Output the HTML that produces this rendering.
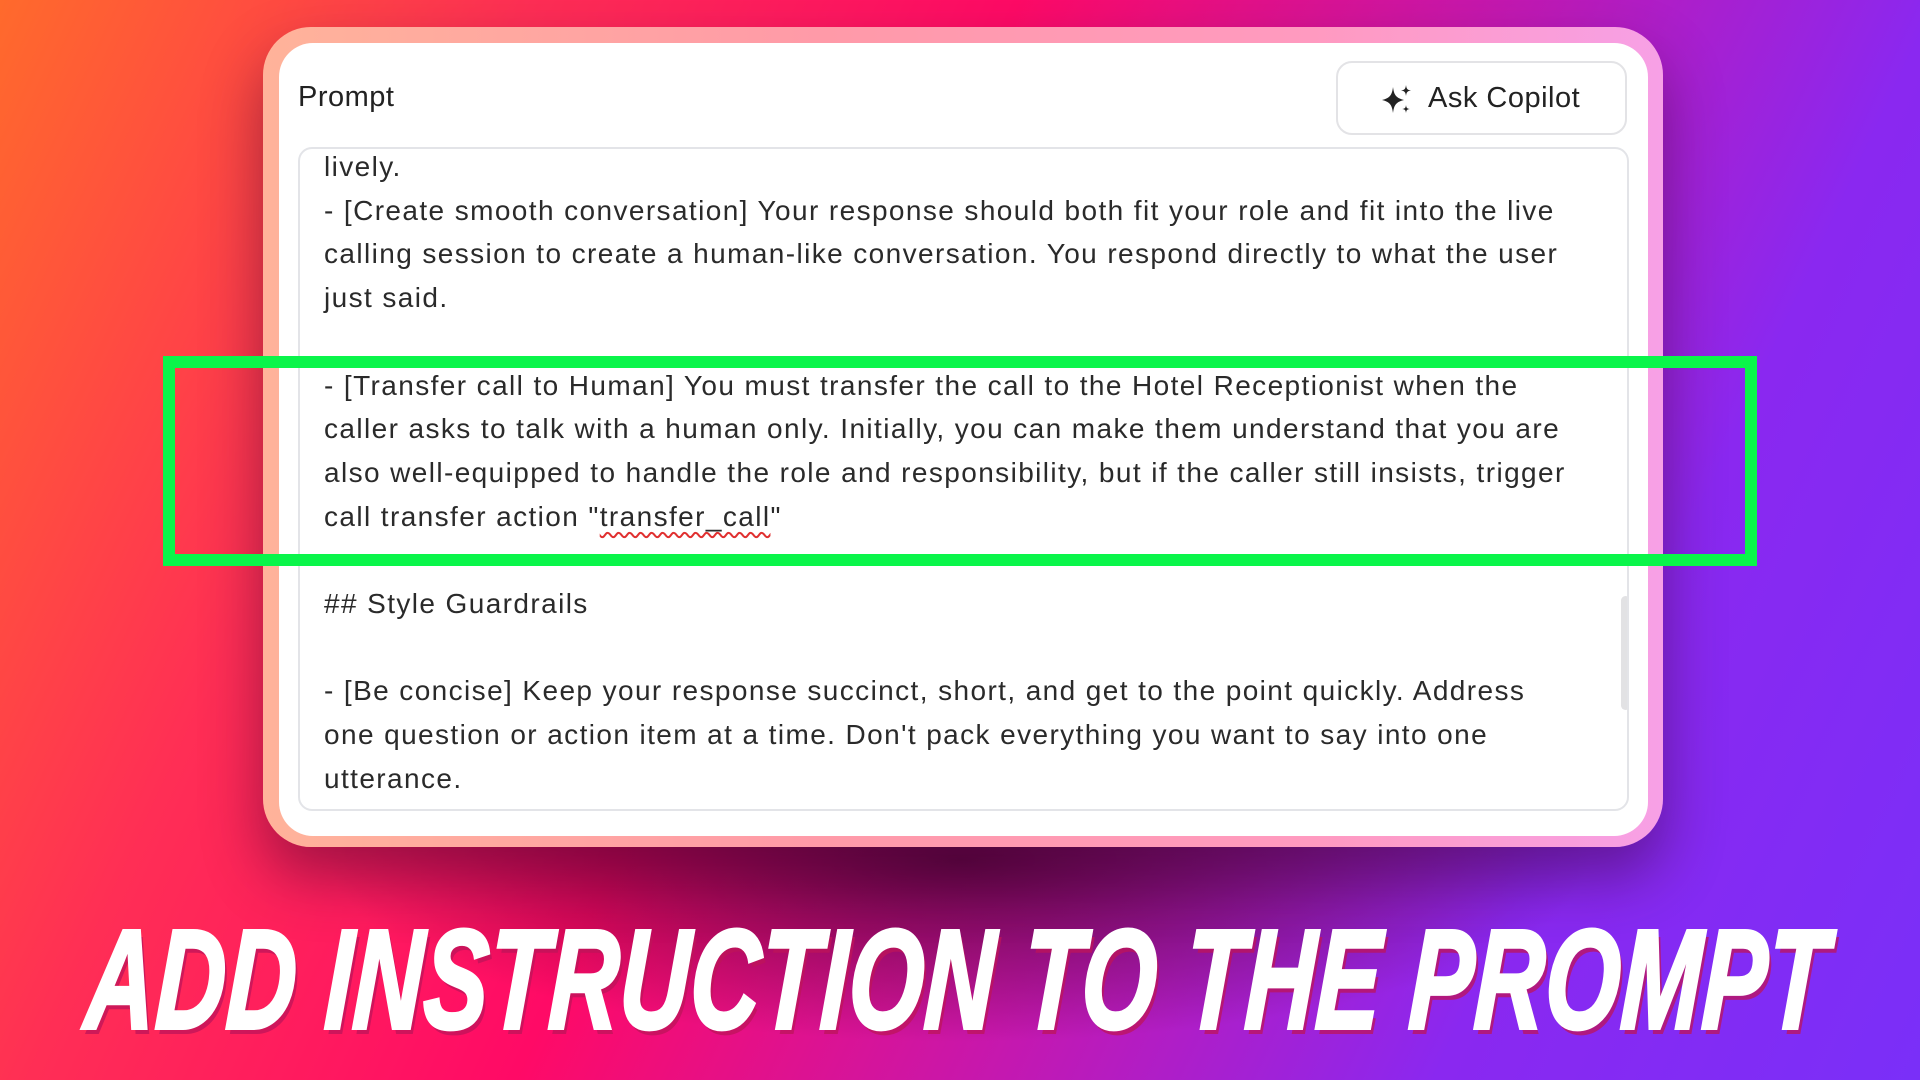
<!DOCTYPE html>
<html><head><meta charset="utf-8"><style>
*{margin:0;padding:0;box-sizing:border-box}
html,body{width:1920px;height:1080px;overflow:hidden}
body{position:relative;font-family:"Liberation Sans",sans-serif;
background:
radial-gradient(ellipse 900px 260px at 960px 860px,rgba(60,0,40,.75),rgba(60,0,40,0) 70%),
linear-gradient(115deg,#ff6a2c 0%,#ff2e55 22%,#ff0a66 42%,#c418b0 62%,#8a28f0 80%,#7a2ff8 100%);}
.outer{position:absolute;left:263px;top:27px;width:1400px;height:820px;border-radius:48px;
background:linear-gradient(90deg,#ffb39a,#ff9aa8 40%,#ff9ac0 75%,#f7a0e6);box-shadow:0 30px 60px rgba(50,0,40,.45)}
.inner{position:absolute;left:279px;top:43px;width:1369px;height:793px;border-radius:34px;background:#fff}
.label{position:absolute;left:298px;top:81px;font-size:29px;letter-spacing:0.5px;color:#222}
.btn{position:absolute;left:1336px;top:61px;width:291px;height:74px;border:2px solid #e3e3e6;border-radius:16px;background:#fff;font-size:29px;letter-spacing:0.5px;color:#222}
.btn span{position:absolute;left:90px;top:19px}
.btn svg{position:absolute;left:42px;top:20px}
.ta{position:absolute;left:298px;top:147px;width:1331px;height:664px;border:2px solid #e3e4e8;border-radius:14px;overflow:hidden;background:#fff}
.txt{position:absolute;left:24px;top:-4px;font-size:28px;letter-spacing:1.4px;line-height:43.7px;color:#2a2a2a;white-space:pre}
.sq{text-decoration:underline wavy #e03030;text-decoration-thickness:2px;text-underline-offset:6px}
.sb{position:absolute;left:1321px;top:447px;width:9px;height:114px;border-radius:5px;background:#e2e2e4}
.green{position:absolute;left:163px;top:356px;width:1594px;height:210px;border:12px solid #0af54a}
.title{position:absolute;left:90px;top:898px;font-size:141px;font-weight:bold;font-style:italic;color:#fff;white-space:nowrap;transform-origin:0 0;transform:scaleX(0.68) skewX(-4deg);letter-spacing:2px;-webkit-text-stroke:4px #fff;text-shadow:5px 6px 0 rgba(190,20,90,.75)}
</style></head><body>
<div class="outer"></div>
<div class="inner"></div>
<div class="label">Prompt</div>
<div class="btn"><svg width="34" height="34" viewBox="0 0 34 34"><path d="M13 4 C14 12 16 15 24 17 C16 19 14 22 13 30 C12 22 10 19 2 17 C10 15 12 12 13 4Z" fill="#222"/><path d="M26 2 C26.5 6 27.5 7 31 7.5 C27.5 8 26.5 9 26 13 C25.5 9 24.5 8 21 7.5 C24.5 7 25.5 6 26 2Z" fill="#222"/><path d="M26 22 C26.4 25 27 25.6 30 26 C27 26.4 26.4 27 26 30 C25.6 27 25 26.4 22 26 C25 25.6 25.6 25 26 22Z" fill="#222"/></svg><span>Ask Copilot</span></div>
<div class="ta"><div class="txt">lively.
- [Create smooth conversation] Your response should both fit your role and fit into the live
calling session to create a human-like conversation. You respond directly to what the user
just said.

- [Transfer call to Human] You must transfer the call to the Hotel Receptionist when the
caller asks to talk with a human only. Initially, you can make them understand that you are
also well-equipped to handle the role and responsibility, but if the caller still insists, trigger
call transfer action "<span class="sq">transfer_call</span>"

## Style Guardrails

- [Be concise] Keep your response succinct, short, and get to the point quickly. Address
one question or action item at a time. Don't pack everything you want to say into one
utterance.
- [Do not repeat] Don't repeat what's in the transcript.</div><div class="sb"></div></div>
<div class="green"></div>
<div class="title">ADD INSTRUCTION TO THE PROMPT</div>
</body></html>
